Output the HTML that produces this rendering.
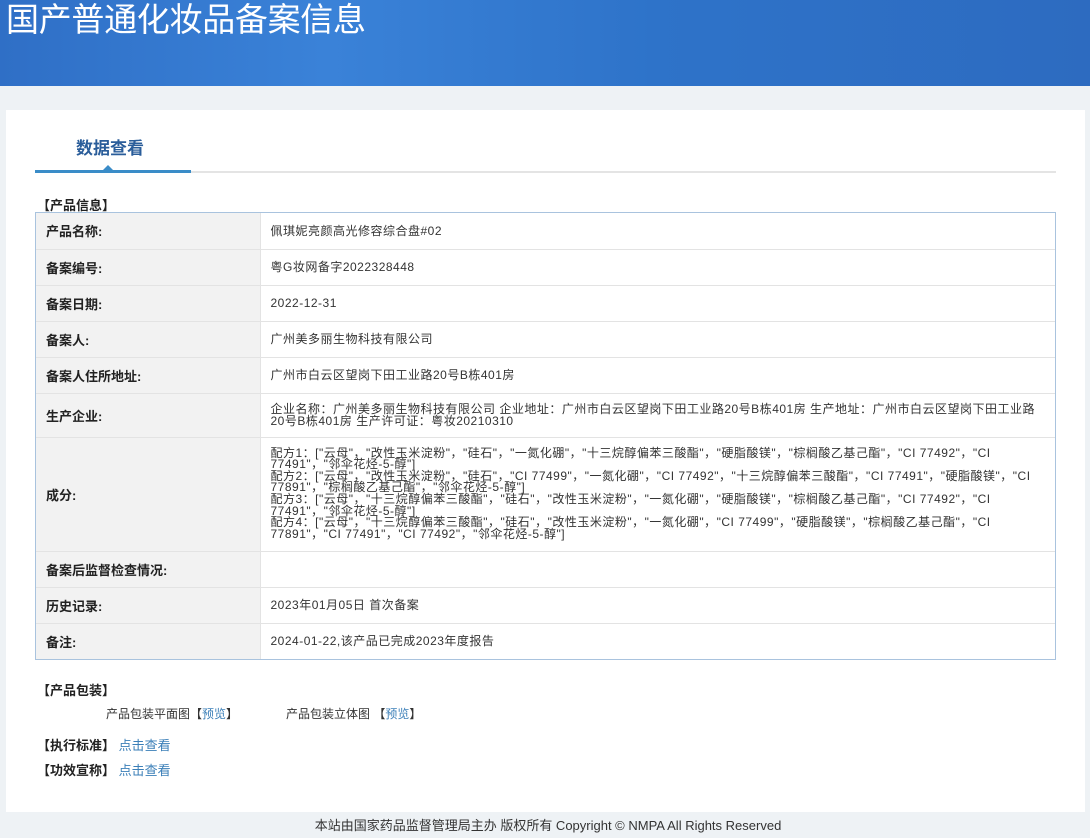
<!DOCTYPE html>
<html><head><meta charset="utf-8"><style>
*{margin:0;padding:0;box-sizing:border-box}
body{width:1090px;height:838px;background:#eef2f5;font-family:"Liberation Sans","Noto Sans CJK SC",sans-serif;color:#333;position:relative;overflow:hidden}
.hd{position:absolute;left:0;top:0;width:1090px;height:86px;background:linear-gradient(90deg,#2f6fc6 0%,#3a82d8 30%,#2e73c9 60%,#2d6bc0 100%)}
.hd h1{position:absolute;left:6px;top:0;font-size:33px;line-height:40px;font-weight:normal;color:#fff;letter-spacing:-0.3px}
.panel{position:absolute;left:6px;top:110px;width:1079px;height:702px;background:#fff}
.tab{position:absolute;left:76px;top:134px;font-size:17px;font-weight:bold;color:#2a5d9a}
.tline{position:absolute;left:35px;top:171px;width:1021px;height:2px;background:#e4e4e4}
.tact{position:absolute;left:35px;top:170px;width:156px;height:3px;background:#3a8cc8}
.tri{position:absolute;left:103px;top:165px;width:0;height:0;border-left:5px solid transparent;border-right:5px solid transparent;border-bottom:5px solid #3a8cc8}
.sec{position:absolute;font-size:13px;font-weight:bold;color:#222}
.tw{position:absolute;left:35px;top:212px;width:1021px;border:1px solid #a9c3de}
table{width:100%;border-collapse:collapse;border-style:hidden}
td{border:1px solid #e3e3e3;font-size:12px;color:#333;padding:0 10px;vertical-align:middle}
td.l{width:224px;background:#f2f2f2;font-weight:bold;font-size:13px;color:#222}
td.v{line-height:12px;letter-spacing:0.5px}
a{color:#3b7fb8;text-decoration:none}
.s{position:absolute;font-size:12px;color:#333}
.ft{position:absolute;left:0;width:1090px;top:815px;text-align:center;font-size:13px;color:#333;padding-left:6px}
</style></head><body>
<div class="hd"><h1>国产普通化妆品备案信息</h1></div>
<div class="panel"></div>
<div class="tab">数据查看</div>
<div class="tline"></div><div class="tact"></div><div class="tri"></div>
<div class="sec" style="left:37px;top:195px">【产品信息】</div>
<div class="tw"><table>
<tr style="height:36px"><td class="l">产品名称:</td><td class="v">佩琪妮亮颜高光修容综合盘#02</td></tr>
<tr style="height:36px"><td class="l">备案编号:</td><td class="v">粤G妆网备字2022328448</td></tr>
<tr style="height:36px"><td class="l">备案日期:</td><td class="v">2022-12-31</td></tr>
<tr style="height:36px"><td class="l">备案人:</td><td class="v">广州美多丽生物科技有限公司</td></tr>
<tr style="height:36px"><td class="l">备案人住所地址:</td><td class="v">广州市白云区望岗下田工业路20号B栋401房</td></tr>
<tr style="height:44px"><td class="l">生产企业:</td><td class="v">企业名称：广州美多丽生物科技有限公司 企业地址：广州市白云区望岗下田工业路20号B栋401房 生产地址：广州市白云区望岗下田工业路20号B栋401房 生产许可证：粤妆20210310</td></tr>
<tr style="height:114px"><td class="l">成分:</td><td class="v" style="line-height:11.6px">配方1：["云母"，"改性玉米淀粉"，"硅石"，"一氮化硼"，"十三烷醇偏苯三酸酯"，"硬脂酸镁"，"棕榈酸乙基己酯"，"CI 77492"，"CI 77491"，"邻伞花烃-5-醇"]<br>配方2：["云母"，"改性玉米淀粉"，"硅石"，"CI 77499"，"一氮化硼"，"CI 77492"，"十三烷醇偏苯三酸酯"，"CI 77491"，"硬脂酸镁"，"CI 77891"，"棕榈酸乙基己酯"，"邻伞花烃-5-醇"]<br>配方3：["云母"，"十三烷醇偏苯三酸酯"，"硅石"，"改性玉米淀粉"，"一氮化硼"，"硬脂酸镁"，"棕榈酸乙基己酯"，"CI 77492"，"CI 77491"，"邻伞花烃-5-醇"]<br>配方4：["云母"，"十三烷醇偏苯三酸酯"，"硅石"，"改性玉米淀粉"，"一氮化硼"，"CI 77499"，"硬脂酸镁"，"棕榈酸乙基己酯"，"CI 77891"，"CI 77491"，"CI 77492"，"邻伞花烃-5-醇"]</td></tr>
<tr style="height:36px"><td class="l">备案后监督检查情况:</td><td class="v"></td></tr>
<tr style="height:36px"><td class="l">历史记录:</td><td class="v">2023年01月05日 首次备案</td></tr>
<tr style="height:36px"><td class="l">备注:</td><td class="v">2024-01-22,该产品已完成2023年度报告</td></tr>
</table></div>
<div class="sec" style="left:37px;top:680px">【产品包装】</div>
<div class="s" style="left:106px;top:705px">产品包装平面图【<a>预览</a>】</div>
<div class="s" style="left:286px;top:705px">产品包装立体图 【<a>预览</a>】</div>
<div class="sec" style="left:37px;top:735px">【执行标准】 <a style="font-weight:normal">点击查看</a></div>
<div class="sec" style="left:37px;top:760px">【功效宣称】 <a style="font-weight:normal">点击查看</a></div>
<div class="ft">本站由国家药品监督管理局主办 版权所有 Copyright © NMPA All Rights Reserved</div>
</body></html>
